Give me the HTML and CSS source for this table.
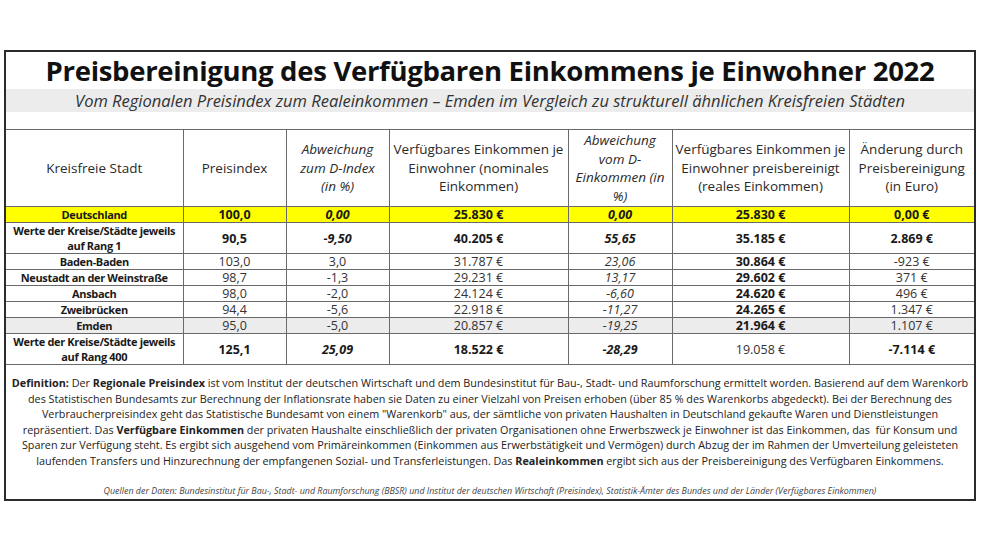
FILE: index.html
```html
<!DOCTYPE html>
<html lang="de">
  <head>
    <meta charset="utf-8" />
    <title>Preisbereinigung des Verfügbaren Einkommens je Einwohner 2022</title>
    <link rel="stylesheet" href="styles.css">
  </head>
  <body>
    <div class="sheet">
      <h1 class="sheet__title">Preisbereinigung des Verfügbaren Einkommens je Einwohner 2022</h1>
      <p class="sheet__subtitle">Vom Regionalen Preisindex zum Realeinkommen – Emden im Vergleich zu strukturell ähnlichen Kreisfreien Städten</p>

      <!-- Vergleichstabelle -->
      <table class="p-table">
        <colgroup>
          <col class="c1"><col class="c2"><col class="c2"><col class="c4">
          <col class="c5"><col class="c1"><col class="c7">
        </colgroup>
        <thead>
          <tr class="p-table__head">
            <th>Kreisfreie Stadt</th>
            <th>Preisindex</th>
            <th class="i">Abweichung<br>zum D-Index<br>(in %)</th>
            <th>Verfügbares Einkommen je<br>Einwohner (nominales<br>Einkommen)</th>
            <th class="i">Abweichung<br>vom D-<br>Einkommen (in<br>%)</th>
            <th>Verfügbares Einkommen je<br>Einwohner preisbereinigt<br>(reales Einkommen)</th>
            <th>Änderung durch<br>Preisbereinigung<br>(in Euro)</th>
          </tr>
        </thead>
        <tbody>
          <tr class="row--de">
            <td class="b">Deutschland</td>
            <td class="b">100,0</td>
            <td class="b i">0,00</td>
            <td class="b">25.830 €</td>
            <td class="b i">0,00</td>
            <td class="b">25.830 €</td>
            <td class="b">0,00 €</td>
          </tr>
          <tr class="row--double">
            <td class="b">Werte der Kreise/Städte jeweils<br>auf Rang 1</td>
            <td class="b">90,5</td>
            <td class="b i">-9,50</td>
            <td class="b">40.205 €</td>
            <td class="b i">55,65</td>
            <td class="b">35.185 €</td>
            <td class="b">2.869 €</td>
          </tr>
          <tr class="row--a">
            <td class="b">Baden-Baden</td>
            <td>103,0</td>
            <td>3,0</td>
            <td>31.787 €</td>
            <td class="i">23,06</td>
            <td class="b">30.864 €</td>
            <td>-923 €</td>
          </tr>
          <tr class="row--b">
            <td class="b">Neustadt an der Weinstraße</td>
            <td>98,7</td>
            <td>-1,3</td>
            <td>29.231 €</td>
            <td class="i">13,17</td>
            <td class="b">29.602 €</td>
            <td>371 €</td>
          </tr>
          <tr class="row--a">
            <td class="b">Ansbach</td>
            <td>98,0</td>
            <td>-2,0</td>
            <td>24.124 €</td>
            <td class="i">-6,60</td>
            <td class="b">24.620 €</td>
            <td>496 €</td>
          </tr>
          <tr class="row--b">
            <td class="b">Zweibrücken</td>
            <td>94,4</td>
            <td>-5,6</td>
            <td>22.918 €</td>
            <td class="i">-11,27</td>
            <td class="b">24.265 €</td>
            <td>1.347 €</td>
          </tr>
          <tr class="row--a row--emden">
            <td class="b">Emden</td>
            <td>95,0</td>
            <td>-5,0</td>
            <td>20.857 €</td>
            <td class="i">-19,25</td>
            <td class="b">21.964 €</td>
            <td>1.107 €</td>
          </tr>
          <tr class="row--double">
            <td class="b">Werte der Kreise/Städte jeweils<br>auf Rang 400</td>
            <td class="b">125,1</td>
            <td class="b i">25,09</td>
            <td class="b">18.522 €</td>
            <td class="b i">-28,29</td>
            <td>19.058 €</td>
            <td class="b">-7.114 €</td>
          </tr>
        </tbody>
      </table>

      <!-- Definition -->
      <p class="sheet__def">
        <span class="line"><b>Definition:</b> Der <b>Regionale Preisindex</b> ist vom Institut der deutschen Wirtschaft und dem Bundesinstitut für Bau-, Stadt- und Raumforschung ermittelt worden. Basierend auf dem Warenkorb</span>
        <span class="line">des Statistischen Bundesamts zur Berechnung der Inflationsrate haben sie Daten zu einer Vielzahl von Preisen erhoben (über 85 % des Warenkorbs abgedeckt). Bei der Berechnung des</span>
        <span class="line">Verbraucherpreisindex geht das Statistische Bundesamt von einem "Warenkorb" aus, der sämtliche von privaten Haushalten in Deutschland gekaufte Waren und Dienstleistungen</span>
        <span class="line">repräsentiert. Das <b>Verfügbare Einkommen</b> der privaten Haushalte einschließlich der privaten Organisationen ohne Erwerbszweck je Einwohner ist das Einkommen, das &nbsp;für Konsum und</span>
        <span class="line">Sparen zur Verfügung steht. Es ergibt sich ausgehend vom Primäreinkommen (Einkommen aus Erwerbstätigkeit und Vermögen) durch Abzug der im Rahmen der Umverteilung geleisteten</span>
        <span class="line">laufenden Transfers und Hinzurechnung der empfangenen Sozial- und Transferleistungen. Das <b>Realeinkommen</b> ergibt sich aus der Preisbereinigung des Verfügbaren Einkommens.</span>
      </p>
      <p class="sheet__source">Quellen der Daten: Bundesinstitut für Bau-, Stadt- und Raumforschung (BBSR) und Institut der deutschen Wirtschaft (Preisindex), Statistik-Ämter des Bundes und der Länder (Verfügbares Einkommen)</p>
    </div>
  </body>
</html>
```

FILE: styles.css
```css
/* Base */
html { box-sizing: border-box; }
*, *:before, *:after { box-sizing: inherit; }
body {
  margin: 0;
  background: #fff;
  color: #222;
  font-family: "Open Sans", "Noto Sans", sans-serif;
}
/* Sheet frame */
.sheet {
  margin: 50px 0 0 4px;
  width: 972px;
  height: 451px;
  border: 2px solid #2b2b2b;
  display: flex;
  flex-direction: column;
}
.sheet__title {
  margin: 0;
  height: 37px;
  line-height: 37px;
  font-size: 27.5px;
  letter-spacing: -0.3px;
  font-weight: 700;
  text-align: center;
  color: #111;
  white-space: nowrap;
}
.sheet__subtitle {
  margin: 0 0 17px;
  height: 23px;
  line-height: 23px;
  background: #ececec;
  font-size: 16.5px;
  font-style: italic;
  text-align: center;
  color: #333;
  white-space: nowrap;
}
/* Table */
.p-table {
  width: 968px;
  border-collapse: collapse;
  table-layout: fixed;
  font-size: 12.5px;
}
.c1 { width: 177px; }
.c2 { width: 103px; }
.c4 { width: 179px; }
.c5 { width: 104px; }
.c7 { width: 125px; }
.p-table th, .p-table td {
  border: 1px solid #6a6a6a;
  padding: 0 2px;
  text-align: center;
  vertical-align: middle;
  white-space: nowrap;
  overflow: hidden;
}
.p-table tr > :first-child { border-left: none; }
.p-table tr > :last-child { border-right: none; }
.p-table__head { height: 77px; }
.p-table th {
  font-size: 13.5px;
  font-weight: 400;
  line-height: 18.5px;
  color: #2a2a2a;
}
.p-table td { line-height: 15px; color: #333; }
.p-table td.b { font-weight: 700; color: #1a1a1a; }
.p-table td:first-child { font-size: 11px; letter-spacing: -0.35px; padding: 0; }
.i { font-style: italic; }
.row--de { height: 15px; background: #ffff00; }
.row--double { height: 31px; }
.row--a { height: 16px; }
.row--b { height: 15px; }
.row--emden { background: #ececec; }
/* Definition and source */
.sheet__def {
  margin: 0;
  padding-top: 10px;
  font-size: 10.8px;
  line-height: 15.5px;
  text-align: center;
  color: #222;
}
.sheet__def .line { display: block; white-space: nowrap; }
.sheet__source {
  margin: auto 0 0;
  padding-bottom: 3px;
  font-size: 8.9px;
  line-height: 11px;
  font-style: italic;
  text-align: center;
  color: #444;
  white-space: nowrap;
}
```
